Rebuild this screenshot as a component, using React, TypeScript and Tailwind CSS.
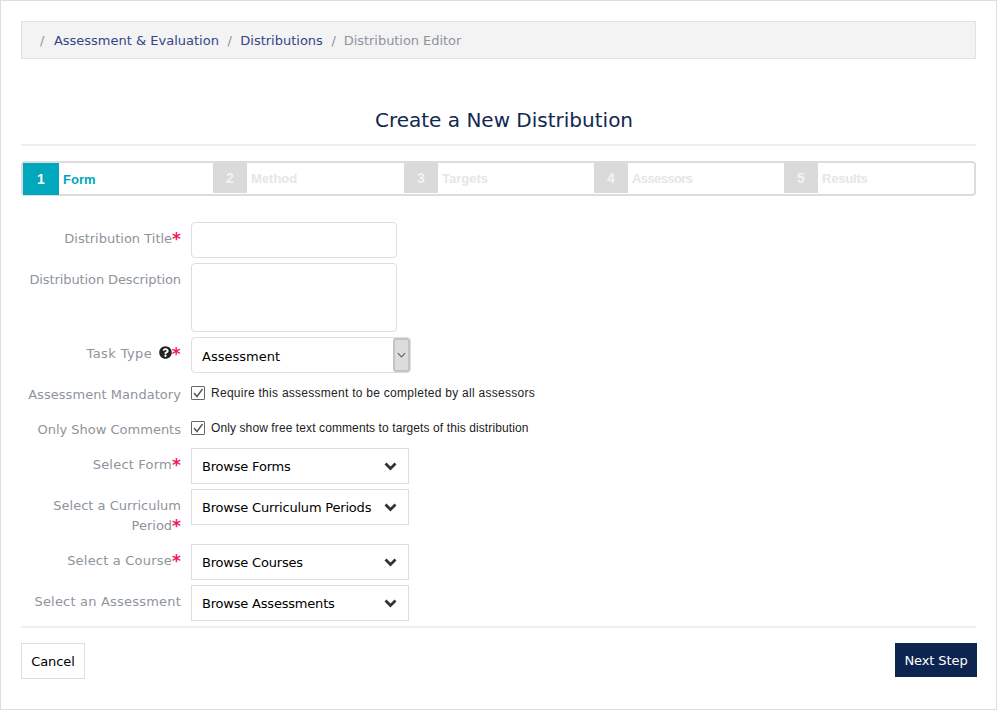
import React from 'react';
import { FaQuestionCircle } from 'react-icons/fa';

const steps = [
  { n: 2, label: 'Method', width: 'w-[191px]', tracking: '' },
  { n: 3, label: 'Targets', width: 'w-[190px]', tracking: '' },
  { n: 4, label: 'Assessors', width: 'w-[190px]', tracking: 'tracking-[-0.6px]' },
  { n: 5, label: 'Results', width: 'w-[160px]', tracking: 'tracking-[-0.2px]' },
];

const Req = () => <span className="relative top-[2px] text-[#ee1c64] font-bold text-[17px] leading-none">*</span>;

const Label: React.FC<{ children: React.ReactNode; tracking?: string }> = ({ children, tracking = '' }) => (
  <div className={`w-[160px] shrink-0 text-right text-[13px] leading-[20px] pt-[7px] text-[#8e949c] ${tracking}`}>{children}</div>
);

const Browse: React.FC<{ text: string }> = ({ text }) => (
  <div className="w-[218px] h-[36px] border border-[#d9dfe5] flex items-center justify-between pl-[10px] pr-[11px] text-[13px] text-black">
    <span className="pt-[2px] tracking-[-0.2px]">{text}</span>
    <svg viewBox="0 0 13 9" className="w-[13px] h-[9px]" fill="none" stroke="#333" strokeWidth="2.8">
      <path d="M1.5 1.5 L6.5 6.5 L11.5 1.5" />
    </svg>
  </div>
);

const Check: React.FC<{ text: string; tracking: string }> = ({ text, tracking }) => (
  <div className="flex items-center gap-[6px] h-[15px]">
    <div className="w-[14px] h-[14px] border border-[#666] rounded-[1px] bg-white flex items-center justify-center mt-[1px]">
      <svg viewBox="0 0 12 12" className="w-[12px] h-[12px]" fill="none" stroke="#555" strokeWidth="1.4">
        <path d="M2 6 L5 9.5 L10.5 2" />
      </svg>
    </div>
    <span className={`font-['Liberation_Sans',sans-serif] text-[12px] text-[#222] ${tracking}`}>{text}</span>
  </div>
);

export default function App() {
  return (
    <div className="w-[997px] h-[710px] border border-[#d9dfe5] bg-white px-[20px] pt-[20px] font-['DejaVu_Sans',sans-serif]">
      {/* Breadcrumb */}
      <div className="h-[38px] bg-[#f3f3f3] border border-[#dfe1e5] flex items-center pl-[18px] pt-[2px] text-[13px] text-[#8e949c] gap-[8.5px] w-[955px]">
        <span>/</span>
        <span className="text-[#35458a] ml-[1px]">Assessment &amp; Evaluation</span>
        <span>/</span>
        <span className="text-[#35458a]">Distributions</span>
        <span>/</span>
        <span className="-ml-[0.5px] tracking-[-0.05px]">Distribution Editor</span>
      </div>

      <h1 className="mt-[48px] text-center text-[20px] leading-[26px] text-[#12284f] w-[966px]">Create a New Distribution</h1>
      <div className="h-[2px] bg-[#eeeeee] mt-[11px] w-[955px]" />

      {/* Steps */}
      <div className="mt-[15px] w-[955px] h-[35px] border-2 border-[#dcdcdc] rounded-[4px] flex items-start font-['Liberation_Sans',sans-serif] font-bold text-[13px]">
        <div className="w-[190px] h-[31px] flex items-center">
          <div className="w-[36px] h-[32px] pt-[1px] bg-[#00a7bd] text-white text-[14px] flex items-center justify-center">1</div>
          <span className="ml-[4px] pt-[2px] text-[#00a7bd]">Form</span>
        </div>
        {steps.map(s => (
          <div key={s.n} className={`${s.width} h-[30px] flex items-center`}>
            <div className="w-[34px] h-[30px] bg-[#dadada] text-[#f2f2f2] text-[14px] flex items-center justify-center">{s.n}</div>
            <span className={`ml-[4px] pt-[2px] text-[#e6e6e6] ${s.tracking}`}>{s.label}</span>
          </div>
        ))}
      </div>

      {/* Form */}
      <div className="mt-[26px] flex flex-col gap-[5px]">
        <div className="flex gap-[10px]">
          <Label>Distribution Title<Req /></Label>
          <div className="w-[206px] h-[36px] border border-[#d9dfe5] rounded-[4px]" />
        </div>
        <div className="flex gap-[10px]">
          <Label tracking="tracking-[-0.1px]">Distribution Description</Label>
          <div className="w-[206px] h-[69px] border border-[#d9dfe5] rounded-[4px]" />
        </div>
        <div className="flex gap-[10px]">
          <Label tracking="tracking-[0.4px]">
            Task Type <FaQuestionCircle className="inline w-[13px] h-[13px] ml-[2px] mb-[5px] text-[#222]" /><Req />
          </Label>
          <div className="w-[220px] h-[36px] border border-[#d9dfe5] rounded-[4px] flex items-center justify-between pl-[10px] text-[13px] text-black">
            <span className="pt-[4px]">Assessment</span>
            <div className="w-[17px] h-[34px] bg-[#dcdcdc] border-2 border-[#c4c4c4] rounded-[3px] flex items-center justify-center">
              <svg viewBox="0 0 10 6" className="w-[9px] h-[6px]" fill="none" stroke="#666" strokeWidth="1.3">
                <path d="M1 1 L5 5 L9 1" />
              </svg>
            </div>
          </div>
        </div>
        <div className="flex gap-[10px] h-[30px]">
          <Label tracking="tracking-[0.05px]">Assessment Mandatory</Label>
          <div className="pt-[7px]"><Check text="Require this assessment to be completed by all assessors" tracking="tracking-[0.27px]" /></div>
        </div>
        <div className="flex gap-[10px] h-[30px]">
          <Label>Only Show Comments</Label>
          <div className="pt-[7px]"><Check text="Only show free text comments to targets of this distribution" tracking="tracking-[0.1px]" /></div>
        </div>
        <div className="flex gap-[10px]">
          <Label tracking="tracking-[0.2px]">Select Form<Req /></Label>
          <Browse text="Browse Forms" />
        </div>
        <div className="flex gap-[10px] h-[50px]">
          <Label>Select a Curriculum Period<Req /></Label>
          <Browse text="Browse Curriculum Periods" />
        </div>
        <div className="flex gap-[10px]">
          <Label tracking="tracking-[0.2px]">Select a Course<Req /></Label>
          <Browse text="Browse Courses" />
        </div>
        <div className="flex gap-[10px]">
          <Label tracking="tracking-[0.2px]">Select an Assessment</Label>
          <Browse text="Browse Assessments" />
        </div>
      </div>

      <div className="h-[2px] bg-[#eeeeee] mt-[5px] w-[955px]" />

      {/* Footer */}
      <div className="mt-[15px] w-[956px] flex justify-between items-start text-[13px] tracking-[-0.1px]">
        <button className="w-[64px] h-[36px] border border-[#d9dfe5] bg-white text-black pt-[2px]">Cancel</button>
        <button className="w-[82px] h-[34px] bg-[#0c2550] text-white pt-[2px]">Next Step</button>
      </div>
    </div>
  );
}
